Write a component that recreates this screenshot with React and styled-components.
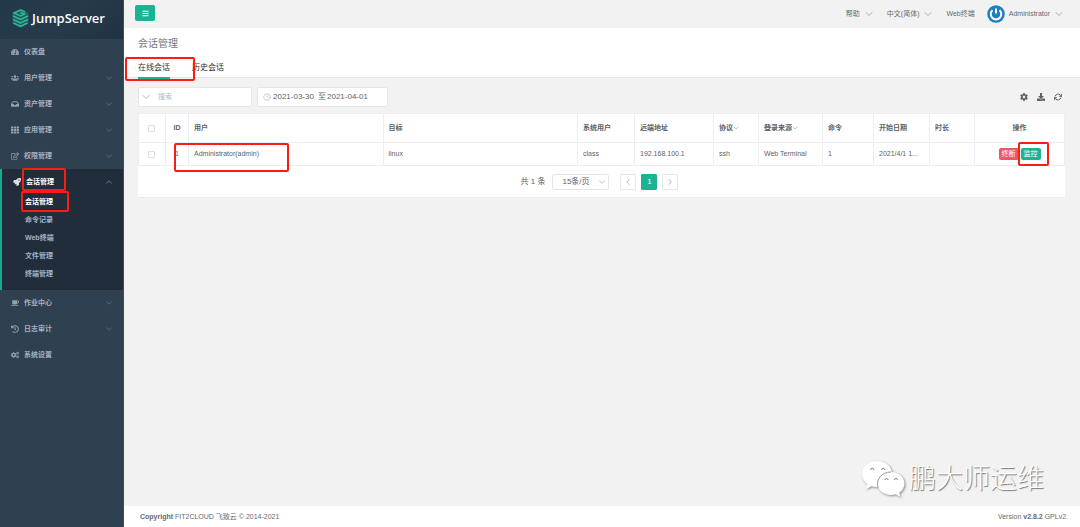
import React from "react";
import styled, { createGlobalStyle, css } from "styled-components";
import {
    FaBars, FaCog, FaCogs, FaCoffee, FaDownload, FaHistory, FaInbox,
    FaRegEdit, FaRocket, FaTachometerAlt, FaTh, FaUsers
} from "react-icons/fa";
import { FiChevronDown, FiChevronLeft, FiChevronRight, FiChevronUp, FiClock, FiRefreshCw } from "react-icons/fi";

const GlobalStyle = createGlobalStyle`
    * {
        box-sizing: border-box;
    }

    body {
        margin: 0;
        background: #f2f2f2;
        color: #606266;
        font-family: "Liberation Sans", "Noto Sans CJK SC", sans-serif;
        font-size: 7px;
        line-height: 12px;
    }

    button, input, select {
        font: inherit;
        color: inherit;
    }

    button {
        cursor: pointer;
    }

    a {
        color: inherit;
        text-decoration: none;
    }
`;

const Layout = styled.div`
    display: flex;
    min-height: 100vh;
`;

const Sidebar = styled.nav`
    flex: 0 0 124px;
    background: #2f4050;
    border-right: 1px solid #3d4d5d;
    color: #a7b1c2;
    font-weight: 700;
`;

const Brand = styled.a`
    display: flex;
    align-items: center;
    gap: 3px;
    height: 39px;
    padding: 0 0 4px 12px;
    background: linear-gradient(135deg, #22384a 0%, #263a4b 50%, #213342 100%);
    color: #fff;
    font: 600 13px "Open Sans", "Noto Sans", sans-serif;
`;

const NavGroup = styled.div`
    ${p => p.$open && css`
        padding-bottom: 7px;
        background: #212d3b;
        border-left: 2px solid #19aa8d;
        color: #fff;
    `}
`;

const NavItem = styled.a`
    display: flex;
    align-items: center;
    height: ${p => (p.$open ? "24px" : "26px")};
    padding: ${p => (p.$open ? "2px 9px 0 11px" : "0 9px 0 11px")};
    gap: 5px;

    > svg {
        width: 8px;
        height: 8px;
        opacity: 0.85;
    }

    > svg:last-child:not(:first-child) {
        width: 10px;
        height: 10px;
        margin-left: auto;
        stroke-width: 1;
    }
`;

const SubItem = styled.a`
    display: flex;
    align-items: center;
    height: 18px;
    padding-left: 23px;
    color: ${p => (p.$active ? "#fff" : "#a7b1c2")};
`;

// red frame drawn round a part of the page
const Marked = styled.span`
    position: relative;

    &::after {
        content: "";
        position: absolute;
        inset: ${p => p.$inset};
        border: 2px solid #fb1d12;
        border-radius: 2px;
        pointer-events: none;
        z-index: 2;
    }
`;

const Main = styled.main`
    position: relative;
    flex: 1;
    min-width: 0;
    display: flex;
    flex-direction: column;
`;

const Navbar = styled.header`
    display: flex;
    align-items: center;
    justify-content: space-between;
    height: 28px;
    padding: 0 15px 0 11px;
`;

const MenuButton = styled.button`
    display: flex;
    align-items: center;
    justify-content: center;
    width: 20px;
    height: 16px;
    margin-bottom: 2px;
    padding: 0;
    border: 0;
    border-radius: 2px;
    background: #1ab394;
    color: #fff;
`;

const UserMenu = styled.div`
    display: flex;
    align-items: center;
    gap: 12px;
`;

const MenuLink = styled.a`
    display: flex;
    align-items: center;
    gap: 4px;
    color: #676a6c;

    > svg:last-child {
        width: 12px;
        height: 12px;
        margin-left: -1px;
        stroke-width: 1;
    }
`;

const PageHead = styled.div`
    height: 50px;
    padding: 8px 14px 0;
    background: #fff;
    border-bottom: 1px solid #e4e7ed;
`;

const PageTitle = styled.h1`
    margin: 0;
    font-size: 10px;
    line-height: 16px;
    font-weight: 400;
    color: #76797c;
`;

const Tabs = styled.div`
    display: flex;
    gap: 22px;
    padding-top: 7px;
`;

const Tab = styled.button`
    height: 20px;
    padding: 0;
    border: 0;
    border-bottom: 2px solid ${p => (p.$active ? "#1ab394" : "transparent")};
    background: none;
    font-size: 8px;
    line-height: 18px;
    color: #303133;
`;

const Content = styled.section`
    flex: 1;
    padding: 9px 15px 20px 14px;
`;

const Toolbar = styled.div`
    display: flex;
    align-items: center;
    gap: 5px;
    margin-bottom: 6px;
`;

const Field = styled.div`
    display: flex;
    align-items: center;
    width: ${p => p.$width};
    height: 20px;
    padding: 0 ${p => p.$pad};
    background: #fff;
    border: 1px solid #e4e6ea;
    border-radius: 2px;
    font-size: ${p => p.$fontSize || "7px"};
    color: #606266;

    > svg {
        flex: none;
        color: #b4b9c2;
    }
`;

const FieldInput = styled.input`
    width: ${p => p.$width};
    min-width: 0;
    margin-left: ${p => p.$indent};
    padding: 0;
    border: 0;
    outline: 0;
    background: none;

    &::placeholder {
        color: #b4b9c2;
    }
`;

const Tools = styled.div`
    display: flex;
    gap: 9px;
    margin-left: auto;
    padding-right: 3px;
`;

const IconButton = styled.button`
    display: flex;
    padding: 0;
    border: 0;
    background: none;
    color: #606266;
`;

const Card = styled.div`
    background: #fff;
    border-bottom: 1px solid #e7eaec;
`;

const Table = styled.table`
    width: 100%;
    table-layout: fixed;
    border-collapse: collapse;
    text-align: left;
`;

const Cell = styled.td`
    width: ${p => p.$width};
    height: 23px;
    padding: 0 5px;
    border: 1px solid #ebeef5;
    text-align: ${p => p.$align || "left"};
    white-space: nowrap;
`;

const HeadCell = styled(Cell).attrs({ as: "th", scope: "col" })`
    height: 29px;
    font-weight: 700;

    svg {
        margin-left: -1px;
        vertical-align: middle;
        color: #a4a9b2;
    }
`;

const Checkbox = styled.input.attrs({ type: "checkbox" })`
    appearance: none;
    display: block;
    width: 7px;
    height: 7px;
    margin: 0 auto 0 4px;
    border: 1px solid #dcdfe6;
    border-radius: 1px;
`;

const RowLink = styled.a`
    color: #337ab7;
`;

const Actions = styled.div`
    display: flex;
    justify-content: center;
    gap: 2px;
`;

const ActionButton = styled.button`
    display: block;
    width: 20px;
    height: 12px;
    padding: 0;
    border: 0;
    border-radius: 2px;
    background: ${p => (p.$danger ? "#ed5565" : "#1ab394")};
    color: #fff;
    line-height: 12px;
`;

const Pagination = styled.div`
    display: flex;
    align-items: center;
    justify-content: center;
    height: 31px;
    gap: 5px;
    padding-right: 4px;
    font-size: 8px;
`;

const PageSize = styled.div`
    position: relative;
    margin: 0 6px 0 2px;

    svg {
        position: absolute;
        right: 2px;
        top: 3px;
        color: #b4b9c2;
        pointer-events: none;
    }
`;

const PageSizeSelect = styled.select`
    appearance: none;
    display: block;
    width: 57px;
    height: 16px;
    padding: 0 0 0 9px;
    border: 1px solid #e4e6ea;
    border-radius: 2px;
    background: #fff;
`;

const PageButton = styled.button`
    display: flex;
    align-items: center;
    justify-content: center;
    width: 16px;
    height: 16px;
    padding: 0;
    border: 1px solid ${p => (p.$active ? "#1ab394" : "#e4e6ea")};
    border-radius: 1px;
    background: ${p => (p.$active ? "#1ab394" : "#fff")};
    color: ${p => (p.$active ? "#fff" : "#a4a9b2")};
`;

const Footer = styled.footer`
    display: flex;
    justify-content: space-between;
    align-items: center;
    height: 21px;
    padding: 0 12px 0 16px;
    background: #fff;
    color: #676a6c;
`;

const Watermark = styled.div`
    position: absolute;
    right: 36px;
    bottom: 28px;
    display: flex;
    align-items: center;
    gap: 4px;
    color: #fff;
    font-size: 27px;
    line-height: 40px;
    font-weight: 300;
    text-shadow: 1px 1px 1px #777;

    svg {
        filter: drop-shadow(1px 1px 1px #888);
    }
`;

const Logo = () => (
    <svg width="17" height="20" viewBox="0 0 34 40" aria-hidden="true">
        <path d="M17 1 33 9v22L17 39 1 31V9z" fill="#1f5f60" />
        <g fill="none" stroke="#35b597" strokeWidth="3">
            <path d="M26 8l-9-4-13 6 13 6 8-4-8-3" />
            <path d="M2 16l15 7 15-7" />
            <path d="M2 23l15 7 15-7" />
            <path d="M3 30l14 7 14-7" />
        </g>
    </svg>
);

const Avatar = () => (
    <svg width="18" height="18" viewBox="0 0 36 36" aria-hidden="true">
        <circle cx="18" cy="18" r="17.5" fill="#1e7fc0" />
        <path d="M11 10.500a10.500 10.500 0 1 0 14 0" fill="none" stroke="#fff" strokeWidth="4" />
        <path d="M18 7v10" stroke="#fff" strokeWidth="4" />
    </svg>
);

const WechatIcon = () => (
    <svg width="44" height="38" viewBox="0 0 44 38" aria-hidden="true">
        <path d="M16 1C7.500 1 1 6.500 1 14c0 4.200 2.200 7.800 5.500 10.200L5 29l5.500-2.800c1.700.5 3.500.8 5.500.8 8.500 0 15-5.500 15-13S24.500 1 16 1z" fill="#fff" />
        <path d="M30 12c-7.500 0-13.500 5-13.500 11.500S22.500 35 30 35c1.700 0 3.300-.2 4.800-.7L39.500 37l-1.200-4.200c3.200-2.100 5.200-5.400 5.200-9.300C43.500 17 37.500 12 30 12z" fill="#fff" />
        <path d="M17 27c-2-7 3-15 13-15" fill="none" stroke="#999" strokeWidth="1" />
        <g fill="none" stroke="#888" strokeWidth="1">
            <path d="M9.500 10a1.700 1.700 0 0 1 3.400 0" />
            <path d="M20.500 10a1.700 1.700 0 0 1 3.400 0" />
            <path d="M24 20a1.500 1.500 0 0 1 3 0" />
            <path d="M33.500 20a1.500 1.500 0 0 1 3 0" />
        </g>
    </svg>
);

const topItems = [
    { label: "仪表盘", icon: FaTachometerAlt, leaf: true },
    { label: "用户管理", icon: FaUsers },
    { label: "资产管理", icon: FaInbox },
    { label: "应用管理", icon: FaTh },
    { label: "权限管理", icon: FaRegEdit }
];

const bottomItems = [
    { label: "作业中心", icon: FaCoffee },
    { label: "日志审计", icon: FaHistory },
    { label: "系统设置", icon: FaCogs, leaf: true }
];

const sessionItems = ["命令记录", "Web终端", "文件管理", "终端管理"];

const columns = [
    { label: "用户" },
    { label: "目标" },
    { label: "系统用户", width: "57px" },
    { label: "远端地址", width: "79px" },
    { label: "协议", width: "45px", filter: true },
    { label: "登录来源", width: "64px", filter: true },
    { label: "命令", width: "51px" },
    { label: "开始日期", width: "56px" },
    { label: "时长", width: "45px" }
];

const row = ["linux", "class", "192.168.100.1", "ssh", "Web Terminal", "1", "2021/4/1 1...", ""];

const NavEntry = ({ label, icon: Icon, leaf }) => (
    <NavItem href="#">
        <Icon />
        <span>{label}</span>
        {!leaf && <FiChevronDown />}
    </NavItem>
);

const App = () => (
    <Layout>
        <GlobalStyle />
        <Sidebar>
            <Brand href="#"><Logo />JumpServer</Brand>
            {topItems.map(item => <NavEntry key={item.label} {...item} />)}
            <NavGroup $open>
                <NavItem href="#" $open>
                    <FaRocket />
                    <Marked $inset="-8px -12px -3px -4px">会话管理</Marked>
                    <FiChevronUp />
                </NavItem>
                <SubItem href="#" $active>
                    <Marked $inset="-5px -16px -4px -4px">会话管理</Marked>
                </SubItem>
                {sessionItems.map(label => <SubItem href="#" key={label}>{label}</SubItem>)}
            </NavGroup>
            {bottomItems.map(item => <NavEntry key={item.label} {...item} />)}
        </Sidebar>
        <Main>
            <Navbar>
                <MenuButton aria-label="菜单"><FaBars /></MenuButton>
                <UserMenu>
                    <MenuLink href="#">帮助<FiChevronDown /></MenuLink>
                    <MenuLink href="#">中文(简体)<FiChevronDown /></MenuLink>
                    <MenuLink href="#">Web终端</MenuLink>
                    <MenuLink href="#"><Avatar />Administrator<FiChevronDown /></MenuLink>
                </UserMenu>
            </Navbar>
            <PageHead>
                <PageTitle>会话管理</PageTitle>
                <Tabs>
                    <Marked $inset="-2px -25px -2px -13px"><Tab $active>在线会话</Tab></Marked>
                    <Tab>历史会话</Tab>
                </Tabs>
            </PageHead>
            <Content>
                <Toolbar>
                    <Field $width="114px" $pad="1px">
                        <FiChevronDown size={12} strokeWidth={2} />
                        <FieldInput $width="80px" $indent="6px" placeholder="搜索" aria-label="搜索" />
                    </Field>
                    <Field $width="131px" $pad="5px" $fontSize="8px">
                        <FiClock size={8} />
                        <FieldInput $width="45px" $indent="2px" defaultValue="2021-03-30" aria-label="开始日期" />
                        <span>至</span>
                        <FieldInput $width="45px" $indent="1px" defaultValue="2021-04-01" aria-label="结束日期" />
                    </Field>
                    <Tools>
                        <IconButton aria-label="设置"><FaCog size={8} /></IconButton>
                        <IconButton aria-label="下载"><FaDownload size={8} /></IconButton>
                        <IconButton aria-label="刷新"><FiRefreshCw size={8} strokeWidth={3} /></IconButton>
                    </Tools>
                </Toolbar>
                <Card>
                    <Table>
                        <thead>
                            <tr>
                                <HeadCell $width="27px"><Checkbox aria-label="全选" /></HeadCell>
                                <HeadCell $width="23px" $align="center">ID</HeadCell>
                                {columns.map(col => (
                                    <HeadCell key={col.label} $width={col.width}>
                                        {col.label}
                                        {col.filter && <FiChevronDown size={8} />}
                                    </HeadCell>
                                ))}
                                <HeadCell $width="90px" $align="center">操作</HeadCell>
                            </tr>
                        </thead>
                        <tbody>
                            <tr>
                                <Cell><Checkbox aria-label="选择" /></Cell>
                                <Cell $align="center"><RowLink href="#">1</RowLink></Cell>
                                <Cell><Marked $inset="-7px -30px -15px -20px">Administrator(admin)</Marked></Cell>
                                {row.map((text, i) => <Cell key={i}>{text}</Cell>)}
                                <Cell>
                                    <Actions>
                                        <ActionButton $danger>终断</ActionButton>
                                        <Marked $inset="-6px -8px -6px -3px"><ActionButton>监控</ActionButton></Marked>
                                    </Actions>
                                </Cell>
                            </tr>
                        </tbody>
                    </Table>
                    <Pagination>
                        <span>共 1 条</span>
                        <PageSize>
                            <PageSizeSelect aria-label="每页条数"><option>15条/页</option></PageSizeSelect>
                            <FiChevronDown size={10} />
                        </PageSize>
                        <PageButton aria-label="上一页"><FiChevronLeft size={10} /></PageButton>
                        <PageButton $active>1</PageButton>
                        <PageButton aria-label="下一页"><FiChevronRight size={10} /></PageButton>
                    </Pagination>
                </Card>
            </Content>
            <Footer>
                <span><b>Copyright</b> FIT2CLOUD 飞致云 © 2014-2021</span>
                <span>Version <b>v2.8.2</b> GPLv2.</span>
            </Footer>
            <Watermark><WechatIcon />鹏大师运维</Watermark>
        </Main>
    </Layout>
);

export default App;
